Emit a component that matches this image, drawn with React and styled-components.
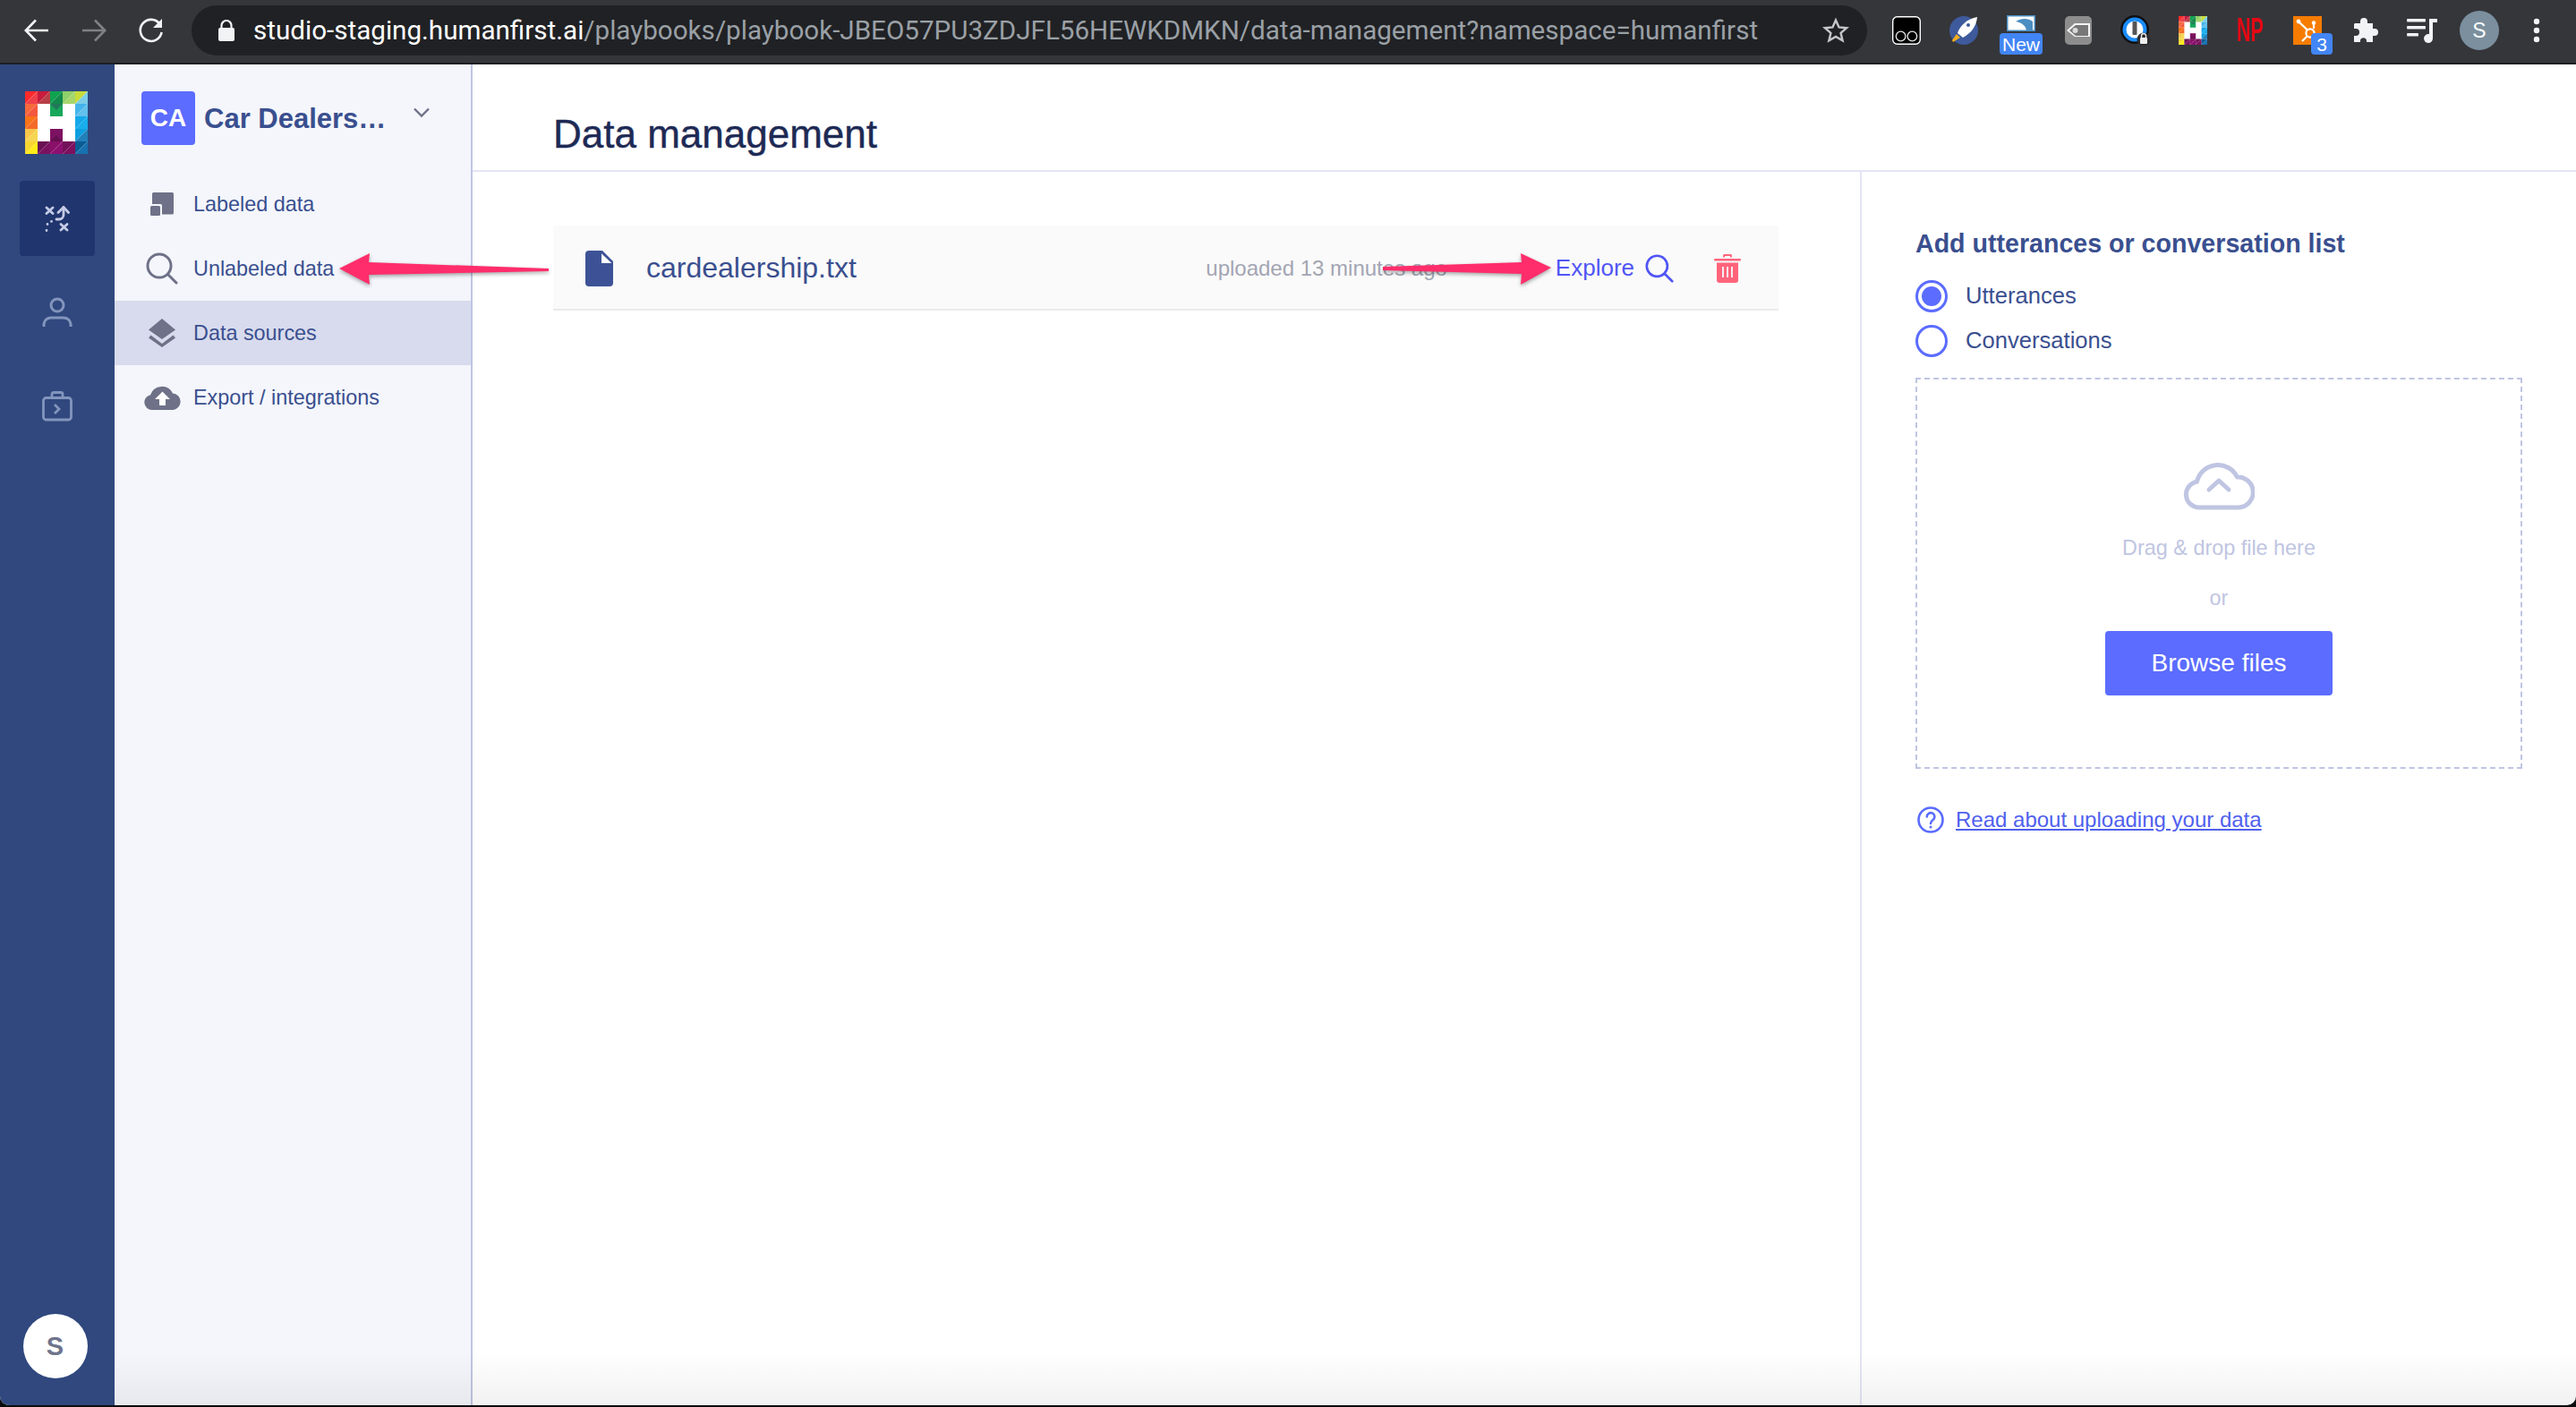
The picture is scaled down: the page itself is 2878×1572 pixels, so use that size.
import React from 'react'
import styled, { createGlobalStyle } from 'styled-components'

const Global = createGlobalStyle`
  html, body { margin: 0; padding: 0; background: #0c0c0e; }
  * { box-sizing: border-box; }
  body { font-family: "Liberation Sans", Arial, sans-serif; }
`

const Window = styled.div`
  position: relative;
  width: 2878px;
  height: 1570px;
  display: flex;
  flex-direction: column;
  overflow: hidden;
  border-radius: 0 0 10px 10px;
  background: #fff;
`

const Toolbar = styled.header`
  height: 72px;
  flex: none;
  display: flex;
  align-items: center;
  padding: 0 12px 2px 9px;
  background: #35363a;
  border-bottom: 2px solid #1e1f22;
`

const Slot = styled.div`
  position: relative;
  width: 64px;
  height: 64px;
  flex: none;
  display: flex;
  align-items: center;
  justify-content: center;
`

const NavButtons = styled.div`
  display: flex;
  width: 205px;
  flex: none;
`

const UrlPill = styled.div`
  width: 1872px;
  height: 56px;
  flex: none;
  display: flex;
  align-items: center;
  padding: 0 20px 0 30px;
  border-radius: 28px;
  background: #202124;
  font-family: Roboto, "Liberation Sans", sans-serif;
  font-size: 29.6px;
  white-space: nowrap;
`

const LockIcon = styled.svg`
  width: 18px;
  height: 24px;
  margin-right: 21px;
  flex: none;
`

const UrlHost = styled.span`
  color: #fff;
`

const UrlPath = styled.span`
  color: #9aa0a6;
  flex: 1;
`

const Extensions = styled.div`
  display: flex;
  margin-left: 12px;
`

const Badge = styled.span`
  position: absolute;
  top: 35px;
  left: ${p => p.$left}px;
  height: 24px;
  min-width: 24px;
  padding: 0 3px;
  display: flex;
  align-items: center;
  justify-content: center;
  border-radius: 4px;
  background: #4285f4;
  color: #fff;
  font-size: 21px;
  line-height: 1;
`

const WaveHolder = styled.div`
  display: flex;
  margin-bottom: 16px;
`

const NpMark = styled.span`
  display: block;
  color: #e50914;
  font-size: 36px;
  font-weight: 700;
  line-height: 1;
  transform: scaleX(0.6);
`

const Avatar = styled.div`
  width: 44px;
  height: 44px;
  border-radius: 50%;
  display: flex;
  align-items: center;
  justify-content: center;
  background: #7b8f9e;
  color: #fff;
  font-size: 23px;
`

const Body = styled.div`
  flex: 1;
  display: flex;
  min-height: 0;
`

const Rail = styled.aside`
  width: 128px;
  flex: none;
  display: flex;
  flex-direction: column;
  align-items: center;
  padding-top: 30px;
  background: #30487e;
`

const LogoBox = styled.div`
  height: 70px;
  margin-bottom: 30px;
  margin-left: -2px;
`

const RailItem = styled.div`
  width: 84px;
  height: 84px;
  margin-bottom: ${p => p.$gap ?? 21}px;
  display: flex;
  align-items: center;
  justify-content: center;
  border-radius: 4px;
  background: ${p => (p.$active ? '#20356e' : 'transparent')};
`

const UserDot = styled.div`
  width: 72px;
  height: 72px;
  margin-top: auto;
  margin-bottom: 30px;
  margin-left: -5px;
  border-radius: 50%;
  display: flex;
  align-items: center;
  justify-content: center;
  background: #fff;
  color: #70748c;
  font-size: 29px;
  font-weight: 700;
`

const SidePanel = styled.nav`
  width: 400px;
  flex: none;
  background: #f4f6fb;
  border-right: 2px solid #bfc5e2;
`

const PlaybookHead = styled.div`
  height: 120px;
  display: flex;
  align-items: center;
  padding: 0 46px 0 30px;
  margin-top: 0;
`

const PlaybookTile = styled.div`
  width: 60px;
  height: 60px;
  flex: none;
  display: flex;
  align-items: center;
  justify-content: center;
  border-radius: 4px;
  background: #5b6cff;
  color: #fff;
  font-size: 28px;
  font-weight: 700;
`

const PlaybookName = styled.div`
  flex: 1;
  margin: 2px 0 0 10px;
  color: #3a4f8f;
  font-size: 31px;
  font-weight: 700;
  white-space: nowrap;
`

const ChevronIcon = styled.svg`
  width: 18px;
  height: 12px;
  margin-bottom: 12px;
  flex: none;
`

const NavItem = styled.div`
  height: 72px;
  display: flex;
  align-items: center;
  padding-left: 30px;
  background: ${p => (p.$active ? '#d8dbed' : 'transparent')};
  color: #3a4f8f;
  font-size: 23.4px;
`

const NavGlyph = styled.div`
  width: 46px;
  margin-right: 12px;
  flex: none;
  display: flex;
  justify-content: center;
`

const Main = styled.main`
  flex: 1;
  min-width: 0;
  display: flex;
  flex-direction: column;
`

const PageHead = styled.div`
  height: 120px;
  flex: none;
  padding: 36px 0 0 90px;
  display: flex;
  align-items: center;
  border-bottom: 2px solid #e3e5f5;
`

const PageTitle = styled.h1`
  margin: 2px 0 0;
  color: #1e2a55;
  font-size: 44px;
  font-weight: 400;
  -webkit-text-stroke: 0.4px #1e2a55;
`

const Columns = styled.div`
  flex: 1;
  display: flex;
  min-height: 0;
`

const FilesColumn = styled.section`
  flex: 1;
  padding: 60px 91px 0 90px;
`

const FileRow = styled.div`
  height: 95px;
  display: flex;
  align-items: center;
  padding: 2px 0 0 36px;
  background: #fafafa;
  border-bottom: 2px solid #eaeaea;
`

const FileName = styled.div`
  margin-left: 37px;
  color: #3a4f8f;
  font-size: 32px;
`

const Uploaded = styled.div`
  margin-left: auto;
  color: #a3a5b3;
  font-size: 24px;
`

const Explore = styled.div`
  margin-left: 121px;
  display: flex;
  align-items: center;
  gap: 12px;
  color: #5055f5;
  font-size: 26px;
`

const TrashBox = styled.div`
  margin: 0 42px 0 45px;
  display: flex;
`

const UploadColumn = styled.aside`
  width: 800px;
  flex: none;
  padding: 61px 60px 0 60px;
  border-left: 2px solid #e3e5f5;
`

const UploadTitle = styled.h2`
  margin: 0 0 14px;
  color: #3a4f8f;
  font-size: 28.6px;
  font-weight: 700;
  line-height: 38px;
`

const RadioRow = styled.label`
  height: 50px;
  display: flex;
  align-items: center;
  gap: 20px;
  color: #3a4f8f;
  font-size: 25.6px;
`

const RadioMark = styled.span`
  width: 36px;
  height: 36px;
  margin-top: 2px;
  flex: none;
  border-radius: 50%;
  border: 3.5px solid #5b6cff;
  display: flex;
  align-items: center;
  justify-content: center;
  &::after {
    content: '';
    width: 22px;
    height: 22px;
    border-radius: 50%;
    background: ${p => (p.$on ? '#5b6cff' : 'transparent')};
  }
`

const DropZone = styled.div`
  height: 437px;
  margin-top: 17px;
  padding-top: 90px;
  display: flex;
  flex-direction: column;
  align-items: center;
  border: 2px dashed #bfc5e2;
`

const DropHint = styled.div`
  margin-top: ${p => p.$top}px;
  color: #bfc5e2;
  font-size: 23.4px;
  line-height: 28px;
`

const BrowseButton = styled.button`
  width: 254px;
  height: 72px;
  margin-top: 23px;
  border: 0;
  border-radius: 4px;
  background: #5b6cff;
  color: #fff;
  font-family: inherit;
  font-size: 28px;
`

const HelpRow = styled.div`
  margin-top: 42px;
  margin-left: 2px;
  display: flex;
  align-items: center;
  gap: 13px;
`

const HelpLink = styled.a`
  color: #5060ee;
  font-size: 24px;
  text-decoration: underline;
`

const BottomFade = styled.div`
  position: absolute;
  left: 128px;
  right: 0;
  bottom: 0;
  height: 60px;
  background: linear-gradient(rgba(0, 0, 0, 0), rgba(0, 0, 0, 0.055));
  pointer-events: none;
`

const Arrow = styled.svg`
  position: absolute;
  left: ${p => p.$left}px;
  top: ${p => p.$top}px;
  filter: drop-shadow(0 2px 2px rgba(0, 0, 0, 0.35));
  pointer-events: none;
`

const logoCells = [
  [0, 0, '#ff2a2a', '#f0404a'], [1, 0, '#c81c3c', '#b84048'], [2, 0, '#0fa34f', '#128a4c'], [3, 0, '#8fd068', '#a6d66c'], [4, 0, '#c8dc3a', '#7ccde8'],
  [0, 1, '#f7683c', '#f4583e'], [4, 1, '#44b4ea', '#62c0ec'],
  [0, 2, '#f97318', '#f46a2a'], [4, 2, '#14a8ea', '#18aeee'],
  [0, 3, '#f8c64a', '#f6d650'], [4, 3, '#0ca0e0', '#2180ba'],
  [0, 4, '#f7d530', '#ffec18'], [1, 4, '#6a1254', '#7a1260'], [2, 4, '#8a1068', '#8c1070'], [3, 4, '#74105a', '#80105e'], [4, 4, '#0b5c94', '#1871b0'],
]

const HfLogo = ({ size }) => (
  <svg width={size} height={size} viewBox="0 0 70 70">
    <rect width="70" height="70" fill="#fff" />
    {logoCells.map(([c, r, a, b]) => {
      const x = c * 14
      const y = r * 14
      return (
        <g key={`${c}-${r}`}>
          <polygon points={`${x},${y} ${x + 14},${y} ${x},${y + 14}`} fill={a} />
          <polygon points={`${x + 14},${y} ${x + 14},${y + 14} ${x},${y + 14}`} fill={b} />
        </g>
      )
    })}
    <polygon points="28,14 42,14 42,28 28,28" fill="#17a85a" />
    <polygon points="28,14 42,14 35,21" fill="#24785a" />
    <polygon points="28,42 42,42 42,56 28,56" fill="#7d1262" />
    <polygon points="28,56 35,49 42,56" fill="#660f50" />
  </svg>
)

const ArrowLeftIcon = ({ color }) => (
  <svg width="28" height="26" viewBox="0 0 28 26" fill="none" stroke={color} strokeWidth="2.6">
    <path d="M27 13H2M13 1.5 1.8 13 13 24.5" />
  </svg>
)

const ArrowRightIcon = ({ color }) => (
  <svg width="28" height="26" viewBox="0 0 28 26" fill="none" stroke={color} strokeWidth="2.6">
    <path d="M1 13h25M15 1.5 26.2 13 15 24.5" />
  </svg>
)

const ReloadIcon = () => (
  <svg width="30" height="30" viewBox="0 0 30 30" fill="none">
    <path d="M24.6 8A12 12 0 1 0 26.6 17" stroke="#f1f3f4" strokeWidth="2.6" />
    <path d="M27 2v10H17z" fill="#f1f3f4" />
  </svg>
)

const StarIcon = () => (
  <svg width="30" height="30" viewBox="0 0 30 30" fill="none" stroke="#c4c7c9" strokeWidth="2.4">
    <path d="M15 3.4l3.5 8 8.6.8-6.5 5.7 2 8.5-7.6-4.5-7.6 4.5 2-8.5L2.9 12.2l8.6-.8z" />
  </svg>
)

const GhostExt = () => (
  <svg width="32" height="32" viewBox="0 0 32 32">
    <rect x="0.7" y="0.7" width="30.6" height="30.6" rx="5" fill="#000" stroke="#fff" strokeWidth="1.4" />
    <circle cx="9.6" cy="22.5" r="5.3" fill="none" stroke="#e8e8e8" strokeWidth="1.3" />
    <circle cx="22.4" cy="22.5" r="5.3" fill="none" stroke="#e8e8e8" strokeWidth="1.3" />
  </svg>
)

const RocketExt = () => (
  <svg width="32" height="32" viewBox="0 0 32 32">
    <circle cx="16" cy="16" r="16" fill="#3e5a9c" />
    <path d="M3 27l5-7 4 4-8 5z" fill="#f6ad1c" />
    <path d="M9 19C12 10 20 3 31 1c-1 11-7 18-16 23z" fill="#fff" />
    <circle cx="21" cy="10" r="2" fill="#3e5a9c" />
  </svg>
)

const WaveExt = () => (
  <WaveHolder>
    <svg width="32" height="18" viewBox="0 0 32 18">
      <rect width="32" height="18" fill="#4b8ec2" />
      <rect x="1.5" y="1.5" width="29" height="15" fill="#fff" />
      <path d="M10 7c6-4 14-4 19 0v10H22c-1-6-6-9-12-10z" fill="#4b8ec2" />
    </svg>
  </WaveHolder>
)

const TagExt = () => (
  <svg width="30" height="32" viewBox="0 0 30 32">
    <rect width="30" height="32" rx="5" fill="#8d8d8d" />
    <path d="M2 16l9-8h17v15H11z" fill="#f4f4f4" />
    <path d="M5 16l7-6h14v12H12z" fill="#777" />
    <circle cx="11.5" cy="16" r="3" fill="#d8d8d8" />
  </svg>
)

const OnePassExt = () => (
  <svg width="34" height="34" viewBox="0 0 34 34">
    <circle cx="16" cy="16" r="16" fill="#111" />
    <circle cx="16" cy="16" r="11.5" fill="#fff" stroke="#1a8cff" strokeWidth="4" />
    <rect x="13.5" y="7" width="5" height="15" rx="1" fill="#555" />
    <circle cx="26" cy="27" r="7.5" fill="#2c2c2e" />
    <rect x="22" y="25" width="8" height="7" rx="1" fill="#eee" />
    <path d="M23.5 25v-2a2.5 2.5 0 0 1 5 0v2" fill="none" stroke="#eee" strokeWidth="1.4" />
  </svg>
)

const HubspotExt = () => (
  <svg width="32" height="32" viewBox="0 0 32 32">
    <rect width="32" height="32" fill="#f57c00" />
    <g stroke="#fff" strokeWidth="2.2" fill="none">
      <circle cx="19" cy="19" r="4.6" />
      <path d="M7 7l9 8.6M23 9v5M15.5 22.5 10 28" />
    </g>
    <circle cx="6" cy="6" r="2.4" fill="#fff" />
    <circle cx="23" cy="7.5" r="2.2" fill="#fff" />
  </svg>
)

const PuzzleExt = () => (
  <svg width="30" height="30" viewBox="0 0 30 30">
    <path d="M4 7h6V5a4 4 0 0 1 8 0v2h6v6h2a4 4 0 0 1 0 8h-2v7h-7v-2a3.6 3.6 0 0 0-7 0v2H3v-7h2a4 4 0 0 0 0-8H3V8z" fill="#f1f3f4" />
  </svg>
)

const MusicExt = () => (
  <svg width="34" height="30" viewBox="0 0 34 30">
    <g fill="#f1f3f4">
      <rect y="2" width="21" height="3.6" rx="1" />
      <rect y="10" width="21" height="3.6" rx="1" />
      <rect y="18" width="13" height="3.6" rx="1" />
      <path d="M25 2h9v4h-5v18a5 5 0 1 1-4-4.9z" />
    </g>
  </svg>
)

const KebabIcon = () => (
  <svg width="8" height="28" viewBox="0 0 8 28" fill="#f1f3f4">
    <circle cx="4" cy="4" r="3.2" />
    <circle cx="4" cy="14" r="3.2" />
    <circle cx="4" cy="24" r="3.2" />
  </svg>
)

const PlaybookIcon = () => (
  <svg width="28" height="29" viewBox="0 0 28 29" fill="none" stroke="#c5cbe6" strokeWidth="2.8" strokeLinecap="round">
    <path d="M2 2l7 6.500M9 2L2 8.500M18 20.500l7 6.500M25 20.500L18 27" />
    <path d="M21 2v8a5 5 0 0 1-5 5h-3" />
    <path d="M15 7.500 21 1.500l5.500 6" />
    <path d="M7.500 17.300v.1M3 20.500v.1M2 27.500v.1" />
  </svg>
)

const PersonIcon = () => (
  <svg width="34" height="34" viewBox="0 0 34 34" fill="none" stroke="#8395bd" strokeWidth="3">
    <circle cx="17" cy="9" r="7" />
    <path d="M2 33v-3a8 8 0 0 1 8-7h14a8 8 0 0 1 8 7v3" />
  </svg>
)

const CaseIcon = () => (
  <svg width="34" height="34" viewBox="0 0 34 34" fill="none" stroke="#8395bd" strokeWidth="2.8">
    <rect x="1.500" y="7.500" width="31" height="24.500" rx="3" />
    <path d="M11 7V3.500a2 2 0 0 1 2-2h8a2 2 0 0 1 2 2V7M14 15l5 5-5 5" />
  </svg>
)

const LabeledIcon = () => (
  <svg width="26" height="26" viewBox="0 0 26 26" fill="#6e7187">
    <path d="M2 1.500A1.500 1.500 0 0 1 3.500 0H24.500A1.500 1.500 0 0 1 26 1.500V23a1.500 1.500 0 0 1-1.500 1.500H13V14.500A1.500 1.500 0 0 0 11.500 13H2z" />
    <rect x="0" y="15" width="11" height="11" rx="1.500" />
  </svg>
)

const SearchIcon = ({ size, color, weight }) => (
  <svg width={size} height={size} viewBox="0 0 36 36" fill="none" stroke={color} strokeWidth={weight}>
    <circle cx="15" cy="15" r="13" />
    <path d="M25 25l9 9" strokeLinecap="round" />
  </svg>
)

const LayersIcon = () => (
  <svg width="30" height="32" viewBox="0 0 30 32" fill="#6e7187">
    <path d="M15 0l15 12.500-15 10.500L0 12.500z" />
    <path d="M2.500 18.500 15 28l12.500-9.500 2.500 3L15 32 0 21.500z" />
  </svg>
)

const CloudUpIcon = () => (
  <svg width="41" height="28" viewBox="0 0 41 28">
    <path d="M9 28a8.500 8.500 0 0 1-2-16.800A13.500 13.500 0 0 1 32 9.500 9.300 9.300 0 0 1 32.500 28z" fill="#6e7187" />
    <path d="M20.500 7.500 29 16h-5v7h-7v-7h-5z" fill="#fff" />
  </svg>
)

const DocIcon = () => (
  <svg width="31" height="40" viewBox="0 0 31 40">
    <path d="M4 0h15l12 12v24a4 4 0 0 1-4 4H4a4 4 0 0 1-4-4V4a4 4 0 0 1 4-4z" fill="#3d5296" />
    <path d="M18 3.300V14h11.300z" fill="#fff" />
  </svg>
)

const TrashIcon = () => (
  <svg width="30" height="32" viewBox="0 0 30 32" fill="#ff647c">
    <path d="M10 3.500V1.500A1.500 1.500 0 0 1 11.500 0h7A1.500 1.500 0 0 1 20 1.500v2h-2V2h-6v1.500z" />
    <rect x="0" y="5" width="30" height="2.500" rx="1" />
    <path d="M3 9.500h24V29a3 3 0 0 1-3 3H6a3 3 0 0 1-3-3z" />
    <path d="M10 14v12M15 14v12M20 14v12" stroke="#fafafa" strokeWidth="1.800" />
  </svg>
)

const CloudOutline = () => (
  <svg width="80" height="56" viewBox="0 0 80 56" fill="none" stroke="#bfc5e2" strokeWidth="5" strokeLinecap="round" strokeLinejoin="round">
    <path d="M18 53a14.500 14.500 0 0 1-2.500-28.800A24 24 0 0 1 60.500 19 17 17 0 0 1 62 53z" />
    <path d="M29 33l11-10 11 10" />
  </svg>
)

const HelpIcon = () => (
  <svg width="30" height="30" viewBox="0 0 30 30" fill="none" stroke="#5b6cff" strokeWidth="2.600">
    <circle cx="15" cy="15" r="13.500" />
    <path d="M10.800 11.500a4.300 4.300 0 1 1 6.800 3.500c-1.700 1.200-2.600 2-2.600 4" strokeLinecap="round" />
    <circle cx="15" cy="23" r="1.500" fill="#5b6cff" stroke="none" />
  </svg>
)

const extensions = [
  { id: 'ghost', icon: <GhostExt /> },
  { id: 'rocket', icon: <RocketExt /> },
  { id: 'wave', icon: <WaveExt />, badge: 'New', left: 8 },
  { id: 'tag', icon: <TagExt /> },
  { id: 'pass', icon: <OnePassExt /> },
  { id: 'hf', icon: <HfLogo size={32} /> },
  { id: 'np', icon: <NpMark>NP</NpMark> },
  { id: 'hub', icon: <HubspotExt />, badge: '3', left: 36 },
  { id: 'puzzle', icon: <PuzzleExt /> },
  { id: 'music', icon: <MusicExt /> },
]

const navItems = [
  { label: 'Labeled data', icon: <LabeledIcon /> },
  { label: 'Unlabeled data', icon: <SearchIcon size={36} color="#6e7187" weight={3} /> },
  { label: 'Data sources', icon: <LayersIcon />, active: true },
  { label: 'Export / integrations', icon: <CloudUpIcon /> },
]

const App = () => (
  <Window>
    <Global />
    <Toolbar>
      <NavButtons>
        <Slot><ArrowLeftIcon color="#f1f3f4" /></Slot>
        <Slot><ArrowRightIcon color="#7f8184" /></Slot>
        <Slot><ReloadIcon /></Slot>
      </NavButtons>
      <UrlPill>
        <LockIcon viewBox="0 0 18 24">
          <path d="M3.500 10V6.500a5.500 5.500 0 0 1 11 0V10" fill="none" stroke="#f1f3f4" strokeWidth="2.200" />
          <rect y="9" width="18" height="15" rx="2" fill="#f1f3f4" />
        </LockIcon>
        <UrlHost>studio-staging.humanfirst.ai</UrlHost>
        <UrlPath>/playbooks/playbook-JBEO57PU3ZDJFL56HEWKDMKN/data-management?namespace=humanfirst</UrlPath>
        <StarIcon />
      </UrlPill>
      <Extensions>
        {extensions.map(ext => (
          <Slot key={ext.id}>
            {ext.icon}
            {ext.badge && <Badge $left={ext.left}>{ext.badge}</Badge>}
          </Slot>
        ))}
        <Slot><Avatar>S</Avatar></Slot>
        <Slot><KebabIcon /></Slot>
      </Extensions>
    </Toolbar>
    <Body>
      <Rail>
        <LogoBox><HfLogo size={70} /></LogoBox>
        <RailItem $active><PlaybookIcon /></RailItem>
        <RailItem><PersonIcon /></RailItem>
        <RailItem><CaseIcon /></RailItem>
        <UserDot>S</UserDot>
      </Rail>
      <SidePanel>
        <PlaybookHead>
          <PlaybookTile>CA</PlaybookTile>
          <PlaybookName>Car Dealers…</PlaybookName>
          <ChevronIcon viewBox="0 0 18 12" fill="none" stroke="#6e7187" strokeWidth="2.400">
            <path d="M1 1.500l8 8 8-8" />
          </ChevronIcon>
        </PlaybookHead>
        {navItems.map(item => (
          <NavItem key={item.label} $active={item.active}>
            <NavGlyph>{item.icon}</NavGlyph>
            {item.label}
          </NavItem>
        ))}
      </SidePanel>
      <Main>
        <PageHead>
          <PageTitle>Data management</PageTitle>
        </PageHead>
        <Columns>
          <FilesColumn>
            <FileRow>
              <DocIcon />
              <FileName>cardealership.txt</FileName>
              <Uploaded>uploaded 13 minutes ago</Uploaded>
              <Explore>
                Explore
                <SearchIcon size={32} color="#5055f5" weight={3} />
              </Explore>
              <TrashBox><TrashIcon /></TrashBox>
            </FileRow>
          </FilesColumn>
          <UploadColumn>
            <UploadTitle>Add utterances or conversation list</UploadTitle>
            <RadioRow><RadioMark $on />Utterances</RadioRow>
            <RadioRow><RadioMark />Conversations</RadioRow>
            <DropZone>
              <CloudOutline />
              <DropHint $top={28}>Drag &amp; drop file here</DropHint>
              <DropHint $top={28}>or</DropHint>
              <BrowseButton>Browse files</BrowseButton>
            </DropZone>
            <HelpRow>
              <HelpIcon />
              <HelpLink>Read about uploading your data</HelpLink>
            </HelpRow>
          </UploadColumn>
        </Columns>
      </Main>
    </Body>
    <BottomFade />
    <Arrow $left={375} $top={278} width="240" height="46" viewBox="0 0 240 46">
      <path d="M4 22 38 5 37 15 238 22V25L37 29 38 40z" fill="#ff2d6b" />
    </Arrow>
    <Arrow $left={1543} $top={278} width="194" height="46" viewBox="0 0 194 46">
      <path d="M190 21 156 5 157 15 2 20V24L157 28 156 40z" fill="#ff2d6b" />
    </Arrow>
  </Window>
)

export default App
